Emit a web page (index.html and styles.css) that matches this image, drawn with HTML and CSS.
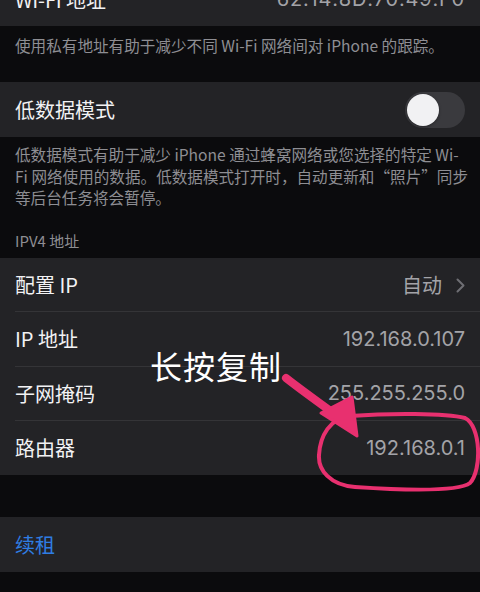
FILE: index.html
```html
<!DOCTYPE html>
<html lang="zh-CN">
<head>
<meta charset="utf-8">
<link rel="stylesheet" href="styles.css">
</head>
<body>
<div class="page">
  <div class="cell first">
    <span class="label">Wi-Fi 地址</span>
    <span class="value mac">62:14:8D:70:49:F0</span>
  </div>
  <div class="footer f1">使用私有地址有助于减少不同 Wi-Fi 网络间对 iPhone 的跟踪。</div>
  <div class="cell">
    <span class="label">低数据模式</span>
    <span class="toggle"><span class="knob"></span></span>
  </div>
  <div class="footer f2">低数据模式有助于减少 iPhone 通过蜂窝网络或您选择的特定 Wi-<br>Fi 网络使用的数据。低数据模式打开时，自动更新和“照片”同步<br>等后台任务将会暂停。</div>
  <div class="header">IPV4 地址</div>
  <div class="group">
    <div class="cell row">
      <span class="label">配置 IP</span>
      <span class="value">自动<svg class="chev" width="9" height="15" viewBox="0 0 9 15"><path d="M1.5 1.5 L7.5 7.5 L1.5 13.5" fill="none" stroke="#6e6e73" stroke-width="2" stroke-linecap="round" stroke-linejoin="round"/></svg></span>
    </div>
    <div class="cell row">
      <span class="label">IP 地址</span>
      <span class="value">192.168.0.107</span>
    </div>
    <div class="cell row">
      <span class="label">子网掩码</span>
      <span class="value">255.255.255.0</span>
    </div>
    <div class="cell row last">
      <span class="label">路由器</span>
      <span class="value">192.168.0.1</span>
    </div>
  </div>
  <div class="gap"></div>
  <div class="cell renew">
    <span class="label blue">续租</span>
  </div>

  <div class="note">长按复制</div>
  <svg class="mark" width="480" height="592" viewBox="0 0 480 592">
    <path d="M350 416 C 390 413, 445 413, 465 418 C 481 426, 482 470, 470 483 C 458 492, 400 490, 355 487 C 330 485, 318 470, 319 455 C 320 436, 330 418, 350 416 Z" fill="none" stroke="#e8306f" stroke-width="4"/>
    <path d="M286 378 C 300 389, 318 402, 336 415" fill="none" stroke="#e8306f" stroke-width="8" stroke-linecap="round"/>
    <path d="M357 436 L321 413 L352 397 Z" fill="#e8306f" stroke="#e8306f" stroke-width="3" stroke-linejoin="round"/>
  </svg>
</div>
</body>
</html>
```

FILE: styles.css
```css
html, body {
  margin: 0;
  padding: 0;
  background: #0b0b0d;
}
body {
  width: 480px;
  height: 592px;
  overflow: hidden;
  font-family: "Inter", "Noto Sans CJK SC", sans-serif;
  color: #f2f2f4;
}
.page {
  position: relative;
  display: flow-root;
  width: 480px;
  height: 592px;
}
.cell {
  display: flex;
  align-items: center;
  justify-content: space-between;
  height: 55px;
  padding: 0 15px;
  background: #232326;
  box-sizing: border-box;
}
.cell.first {
  height: 54px;
  margin-top: -28px;
}
.label {
  font-size: 20px;
  color: #f2f2f4;
  font-family: "Noto Sans CJK SC", sans-serif;
}
.value {
  font-size: 20px;
  color: #a3a3a8;
  display: flex;
  align-items: center;
  gap: 14px;
  font-family: "Inter", "Noto Sans CJK SC", sans-serif;
}
.mac {
  letter-spacing: 0.8px;
}
.chev {
  display: block;
  margin-top: 1px;
}
.footer {
  font-size: 15.6px;
  color: #8e8e93;
  padding: 8px 15px 0;
  line-height: 22px;
  box-sizing: border-box;
  white-space: nowrap;
  font-family: "Noto Sans CJK SC", sans-serif;
}
.f1 {
  height: 56px;
}
.f2 {
  padding-top: 7px;
  line-height: 21.5px;
  height: 94px;
}
.header {
  font-size: 15px;
  color: #8e8e93;
  padding: 0 15px;
  line-height: 20px;
  height: 27px;
  font-family: "Noto Sans CJK SC", sans-serif;
}
.group {
  background: #232326;
}
.group .row {
  height: 54.25px;
  background: transparent;
  padding: 0;
  margin-left: 15px;
  padding-right: 15px;
  border-bottom: 1px solid #343437;
}
.group .row.last {
  border-bottom: none;
}
.gap {
  height: 42px;
}
.renew {
  height: 55px;
}
.blue {
  color: #2f7de3;
}
.toggle {
  width: 60px;
  height: 36px;
  border-radius: 18px;
  background: #3a3a3e;
  position: relative;
}
.knob {
  position: absolute;
  left: 2px;
  top: 2px;
  width: 32px;
  height: 32px;
  border-radius: 50%;
  background: #f1f1f3;
  box-shadow: 0 1px 3px rgba(0,0,0,0.35);
}
.note {
  position: absolute;
  left: 150px;
  top: 343px;
  font-size: 32px;
  line-height: 44px;
  color: #ffffff;
  font-family: "Noto Sans CJK SC", sans-serif;
  letter-spacing: 1px;
}
.mark {
  position: absolute;
  left: 0;
  top: 0;
  pointer-events: none;
}
```
